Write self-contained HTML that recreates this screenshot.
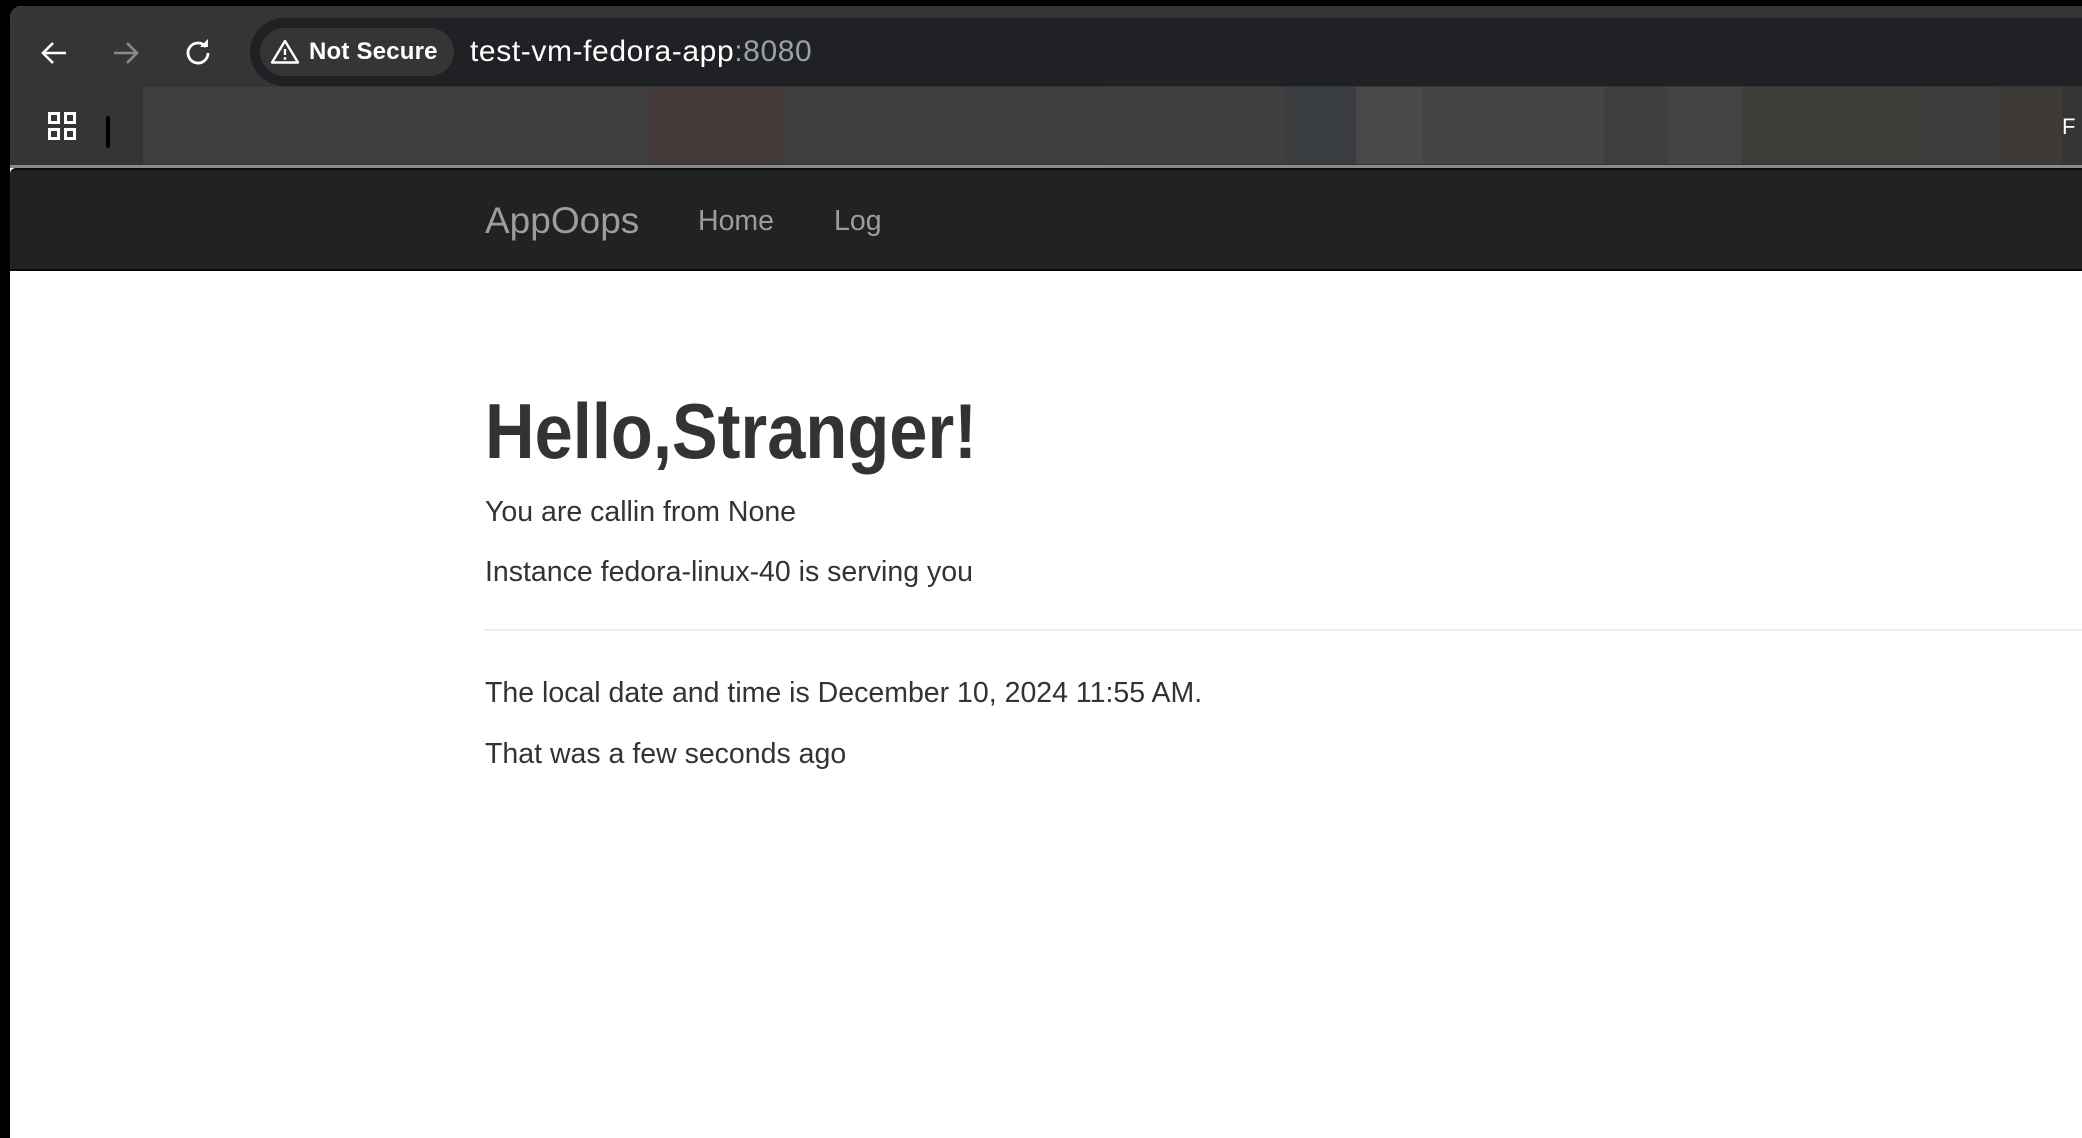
<!DOCTYPE html>
<html><head><meta charset="utf-8"><style>
*{margin:0;padding:0;box-sizing:border-box}
html,body{width:2082px;height:1138px;overflow:hidden;background:#000;font-family:"Liberation Sans",Arial,sans-serif}
#frame{position:absolute;left:10px;top:6px;right:0;bottom:0;background:#fff;border-top-left-radius:12px;overflow:hidden}
#toolbar{position:absolute;left:0;top:0;right:0;height:80px;background:#353535}
#omni{position:absolute;left:240px;top:12px;right:0;height:68px;background:#202124;border-radius:34px 0 0 34px}
#chip{position:absolute;left:10px;top:10px;width:194px;height:48px;background:#353535;border-radius:24px}
#chip span{position:absolute;left:49px;top:10px;color:#fff;font-weight:bold;font-size:24px;letter-spacing:0.2px}
#url{position:absolute;left:220px;top:17px;color:#fff;font-size:30px;letter-spacing:0.6px}
#url i{font-style:normal;color:#9aa0a6}
#bm{position:absolute;left:0;top:80px;right:0;height:80px;background:#353535}
.blk{position:absolute;top:1px;height:77px}
#sep{position:absolute;left:0;top:159px;right:0;height:3px;background:#8a8a8a}
#nav{position:absolute;left:0;top:162px;right:0;height:103px;background:#222;border-top:2px solid #0a0a0a;border-bottom:2px solid #0a0a0a;border-radius:6px 0 0 0}
.nt{position:absolute;color:#9d9d9d}
.c{position:absolute;left:475px;color:#333}
</style></head><body>
<div id="frame">
 <div id="toolbar">
  <svg style="position:absolute;left:30px;top:34px" width="28" height="26" viewBox="0 0 28 26"><path d="M26 13H4M13 3L3 13l10 10" stroke="#fff" stroke-width="2.6" fill="none"/></svg>
  <svg style="position:absolute;left:102px;top:34px" width="28" height="26" viewBox="0 0 28 26"><path d="M2 13h22M15 3l10 10-10 10" stroke="#8a8a8a" stroke-width="2.6" fill="none"/></svg>
  <svg style="position:absolute;left:174px;top:32px" width="28" height="28" viewBox="0 0 28 28"><path d="M22 9A10 10 0 1 0 24 15" stroke="#fff" stroke-width="2.8" fill="none"/><path d="M16 9h8V1z" fill="#fff"/></svg>
  <div id="omni">
   <div id="chip">
    <svg style="position:absolute;left:10px;top:11px" width="30" height="25" viewBox="0 0 30 25"><path d="M15 2L2 23.5h26z" stroke="#fff" stroke-width="2.4" fill="none" stroke-linejoin="round"/><path d="M15 10v6" stroke="#fff" stroke-width="2.4"/><circle cx="15" cy="19.5" r="1.4" fill="#fff"/></svg>
    <span>Not Secure</span>
   </div>
   <div id="url">test-vm-fedora-app<i>:8080</i></div>
  </div>
 </div>
 <div id="bm">
  <svg style="position:absolute;left:38px;top:26px" width="30" height="30" viewBox="0 0 30 30"><g stroke="#fff" stroke-width="3" fill="none"><rect x="1.5" y="1.5" width="9" height="9"/><rect x="17.5" y="1.5" width="9" height="9"/><rect x="1.5" y="17.5" width="9" height="9"/><rect x="17.5" y="17.5" width="9" height="9"/></g></svg>
  <div style="position:absolute;left:96px;top:30px;width:4px;height:32px;background:#000;border-radius:2px"></div>
  <div class="blk" style="left:133px;width:512px;background:#3f3f3f"></div>
  <div class="blk" style="left:635px;width:137px;background:#453a3a"></div>
  <div class="blk" style="left:772px;width:320px;background:#3f3f3f"></div>
  <div class="blk" style="left:1092px;width:183px;background:#404040"></div>
  <div class="blk" style="left:1275px;width:71px;background:#393d40"></div>
  <div class="blk" style="left:1346px;width:66px;background:#4a484b"></div>
  <div class="blk" style="left:1412px;width:182px;background:#444547"></div>
  <div class="blk" style="left:1594px;width:64px;background:#3f3f3f"></div>
  <div class="blk" style="left:1658px;width:74px;background:#444"></div>
  <div class="blk" style="left:1732px;width:183px;background:#3f3d3a"></div>
  <div class="blk" style="left:1915px;width:72px;background:#3d3d3d"></div>
  <div class="blk" style="left:1987px;width:65px;background:#3e3a35"></div>
  <div style="position:absolute;left:2052px;top:28px;color:#fff;font-size:22px">F</div>
 </div>
 <div id="sep"></div>
 <div id="nav">
  <div class="nt" style="left:475px;top:30px;font-size:37px">AppOops</div>
  <div class="nt" style="left:688px;top:35px;font-size:28.5px">Home</div>
  <div class="nt" style="left:824px;top:35px;font-size:28.5px">Log</div>
 </div>
 <div class="c" style="top:379px;font-size:78px;font-weight:bold;white-space:nowrap;transform:scaleX(0.88);transform-origin:0 0;line-height:1.2">Hello,Stranger!</div>
 <div class="c" style="top:490px;font-size:28.5px">You are callin from None</div>
 <div class="c" style="top:550px;font-size:28.5px">Instance fedora-linux-40 is serving you</div>
 <div style="position:absolute;left:475px;right:0;top:623px;height:2px;background:#eee"></div>
 <div class="c" style="top:671px;font-size:28.5px">The local date and time is December 10, 2024 11:55 AM.</div>
 <div class="c" style="top:732px;font-size:28.5px">That was a few seconds ago</div>
</div>
</body></html>
